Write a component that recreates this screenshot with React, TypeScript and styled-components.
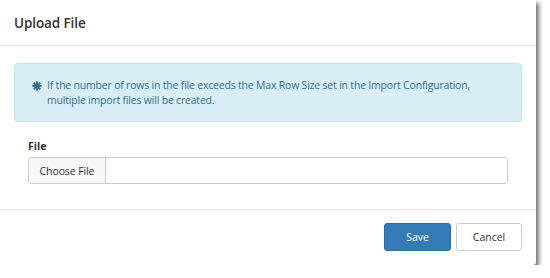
import styled, { createGlobalStyle } from 'styled-components';

const GlobalStyle = createGlobalStyle`
  html, body {
    margin: 0;
    padding: 0;
    background: #ffffff;
  }
  body {
    font-family: "Open Sans", "Noto Sans", Arial, sans-serif;
    color: #333333;
  }
`;

const Modal = styled.div`
  width: 536px;
  height: 265px;
  background: #ffffff;
  border-radius: 0 0 3px 0;
  box-shadow: 3px 3px 4px rgba(0, 0, 0, 0.55);
  display: flex;
  flex-direction: column;
`;

const Header = styled.div`
  height: 45px;
  border-bottom: 1px solid #e5e5e5;
  display: flex;
  align-items: center;
  padding: 0 14px;
`;

const Title = styled.h4`
  margin: 0;
  font-size: 13.5px;
  font-weight: 600;
  color: #333333;
  letter-spacing: -0.1px;
`;

const Body = styled.div`
  padding: 17px 14px 0;
  flex: 1;
`;

const Alert = styled.div`
  background: #d9edf7;
  border: 1px solid #bce8f1;
  border-radius: 4px;
  color: #31708f;
  font-size: 10.5px;
  line-height: 15px;
  padding: 14px 16px 14px 17px;
  box-sizing: border-box;
  height: 59px;
  display: flex;
  gap: 5px;
`;

const IconWrap = styled.span`
  flex: none;
  padding-top: 3px;
  display: flex;
`;

const AlertText = styled.div`
  letter-spacing: -0.2px;
`;

const FormGroup = styled.div`
  margin: 17px 14px 0;
`;

const Label = styled.label`
  display: block;
  font-size: 10.5px;
  font-weight: 700;
  color: #333333;
  margin-bottom: 4px;
`;

const InputGroup = styled.div`
  display: flex;
  height: 27px;
  border: 1px solid #cccccc;
  border-radius: 3px;
  box-sizing: border-box;
  overflow: hidden;
`;

const AddonButton = styled.span`
  display: flex;
  align-items: center;
  justify-content: center;
  white-space: nowrap;
  background: #f7f7f7;
  border-right: 1px solid #cccccc;
  font-size: 10.5px;
  color: #333333;
  width: 77px;
  box-sizing: border-box;
  letter-spacing: -0.1px;
`;

const FileField = styled.span`
  flex: 1;
  background: #ffffff;
`;

const Footer = styled.div`
  border-top: 1px solid #e5e5e5;
  height: 56px;
  box-sizing: border-box;
  padding: 13px 14px 0;
  display: flex;
  justify-content: flex-end;
  gap: 5px;
`;

const Button = styled.button<{ $primary?: boolean }>`
  height: 28px;
  width: ${(p) => (p.$primary ? '67px' : '66px')};
  border-radius: 3px;
  font-family: inherit;
  font-size: 10.5px;
  cursor: pointer;
  border: 1px solid ${(p) => (p.$primary ? '#2e6da4' : '#cccccc')};
  background: ${(p) => (p.$primary ? '#337ab7' : '#ffffff')};
  color: ${(p) => (p.$primary ? '#ffffff' : '#333333')};
  padding: 0;
`;

function AsteriskIcon() {
  return (
    <svg width="10" height="10" viewBox="0 0 10 10">
      <g stroke="#31708f" strokeWidth="1.9" strokeLinecap="butt">
        <line x1="5" y1="0.3" x2="5" y2="9.7" />
        <line x1="0.3" y1="5" x2="9.7" y2="5" />
        <line x1="1.7" y1="1.7" x2="8.3" y2="8.3" />
        <line x1="8.3" y1="1.7" x2="1.7" y2="8.3" />
      </g>
      <circle cx="5" cy="5" r="2.2" fill="#31708f" />
    </svg>
  );
}

export default function App() {
  return (
    <>
      <GlobalStyle />
      <Modal>
        <Header>
          <Title>Upload File</Title>
        </Header>
        <Body>
          <Alert>
            <IconWrap>
              <AsteriskIcon />
            </IconWrap>
            <AlertText>
              If the number of rows in the file exceeds the Max Row Size set in the Import Configuration,
              multiple import files will be created.
            </AlertText>
          </Alert>
          <FormGroup>
            <Label>File</Label>
            <InputGroup>
              <AddonButton>Choose File</AddonButton>
              <FileField />
            </InputGroup>
          </FormGroup>
        </Body>
        <Footer>
          <Button $primary>Save</Button>
          <Button>Cancel</Button>
        </Footer>
      </Modal>
    </>
  );
}
